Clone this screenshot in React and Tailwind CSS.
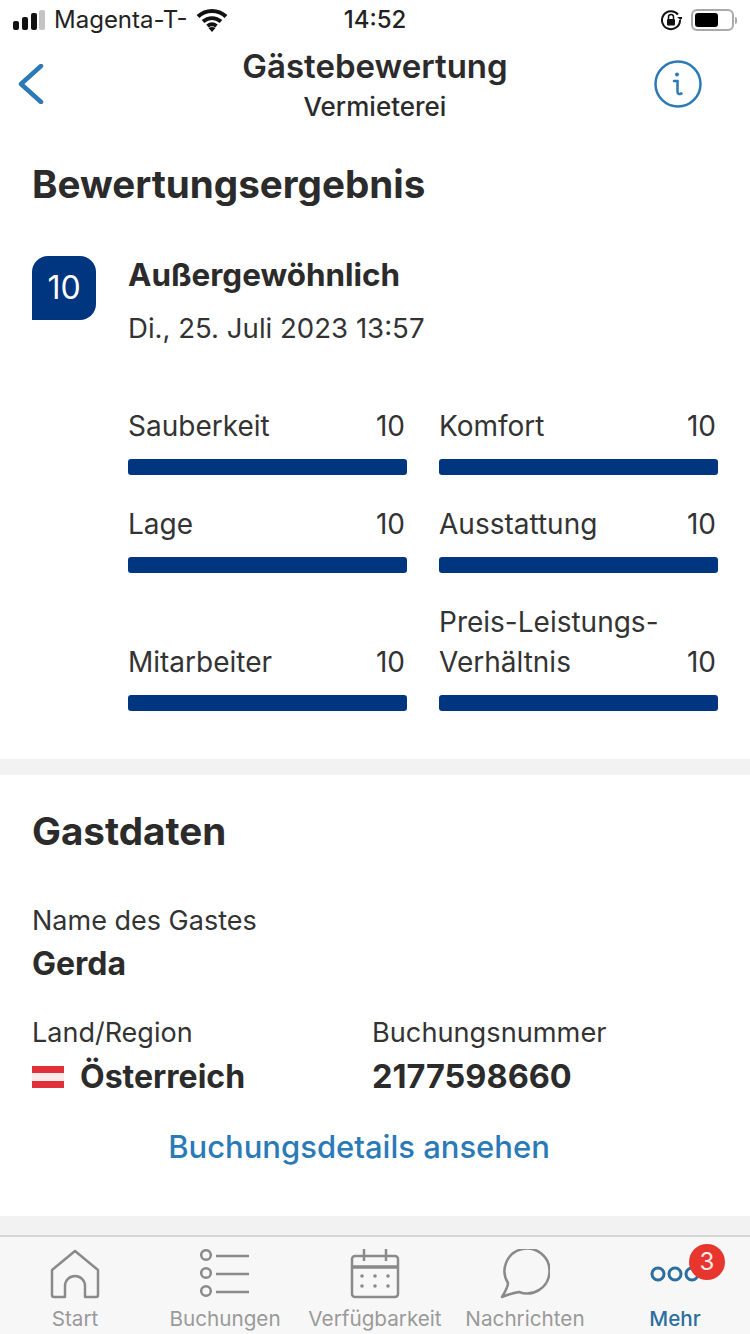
import React from 'react';

const font = { fontFamily: 'Inter, "Noto Sans", sans-serif' };

function Score({ label, second }) {
  return (
    <div className="flex flex-col justify-end">
      <div className="flex items-end justify-between pr-[2px]">
        <div className="text-[28px] leading-[40px] text-[#333]">
          {label}
          {second && <div>{second}</div>}
        </div>
        <span className="text-[28px] leading-[40px] text-[#333]">10</span>
      </div>
      <div className="mt-[13px] h-4 rounded-[3px] bg-[#003580]" />
    </div>
  );
}

function TabItem({ label, active, children }) {
  return (
    <div className="relative flex w-[150px] flex-col items-center">
      <div className="flex h-[54px] items-center justify-center">{children}</div>
      <span className={`mt-[5px] text-[20.7px] leading-[26px] ${active ? 'font-medium text-[#2a6f9e]' : 'text-[#9a9a9a]'}`}>{label}</span>
    </div>
  );
}

export default function App() {
  return (
    <div className="flex h-[1334px] w-[750px] flex-col overflow-hidden bg-white" style={font}>
      {/* status bar */}
      <div className="flex h-10 shrink-0 items-center justify-between pl-[13px] pr-[13px] text-[24px] text-[#222]">
        <div className="flex w-[300px] items-center">
          <svg width="34" height="20" viewBox="0 0 34 20">
            <rect x="0" y="11" width="6" height="9" rx="2" fill="#111" />
            <rect x="9" y="7" width="6" height="13" rx="2" fill="#111" />
            <rect x="18" y="3" width="6" height="17" rx="2" fill="#111" />
            <rect x="26" y="0" width="6" height="20" rx="2" fill="#c4c4c4" />
          </svg>
          <span className="ml-[7px]">Magenta-T-</span>
          <svg className="ml-[8px]" width="32" height="24" viewBox="0 0 32 24">
            <path d="M2 8.500C10 1 22 1 30 8.500M7 13.500c5.500-4.500 12.500-4.500 18 0M11.500 18c3-2.300 6-2.300 9 0" fill="none" stroke="#111" strokeWidth="4" />
            <path d="M16 24l-3.500-4c2-1.500 5-1.500 7 0z" fill="#111" />
          </svg>
        </div>
        <span className="font-medium">14:52</span>
        <div className="flex w-[300px] items-center justify-end gap-[9px]">
          <svg width="22" height="22" viewBox="0 0 22 22">
            <path d="M18 5.500A9 9 0 1 0 20 11" fill="none" stroke="#111" strokeWidth="2" />
            <path d="M20.500 11l-3.500-3h6z" fill="#111" />
            <rect x="7" y="10" width="8" height="6.500" rx="1" fill="#111" />
            <path d="M8.500 10V8a2.500 2.500 0 0 1 5 0v2" fill="none" stroke="#111" strokeWidth="1.500" />
          </svg>
          <div className="flex items-center">
            <div className="flex h-[22px] w-[43px] items-center rounded-[6px] border-2 border-[#aaa] p-[2px]">
              <div className="h-full w-[23px] rounded-[3px] bg-black" />
            </div>
            <div className="ml-[1px] h-[7px] w-[2px] rounded-r-sm bg-[#aaa]" />
          </div>
        </div>
      </div>

      {/* header */}
      <div className="relative flex h-[86px] shrink-0 flex-col items-center pt-[2px] text-[#2b2b2b]">
        <div className="text-[33px] font-semibold leading-[48px]">Gästebewertung</div>
        <div className="text-[26px] font-medium leading-[34px]">Vermieterei</div>
        <svg className="absolute left-[18px] top-[24px]" width="26" height="40" viewBox="0 0 26 40">
          <path d="M23 2L3 20l20 18" fill="none" stroke="#2a7ab8" strokeWidth="4.500" strokeLinecap="round" strokeLinejoin="round" />
        </svg>
        <svg className="absolute left-[654px] top-[20px]" width="48" height="48" viewBox="0 0 48 48">
          <circle cx="24" cy="24" r="22.500" fill="none" stroke="#2a7ab8" strokeWidth="2.500" />
          <circle cx="23" cy="14.500" r="2" fill="#2a7ab8" />
          <path d="M20 21h3.500v11c0 2 1.500 2.500 4 1.500" fill="none" stroke="#2a7ab8" strokeWidth="2.500" strokeLinecap="round" />
        </svg>
      </div>

      {/* rating */}
      <div className="h-[633px] shrink-0 pl-[32px] pr-[32px] pt-[32px]">
        <h1 className="text-[38.6px] font-bold leading-[52px] text-[#2b2b2b]">Bewertungsergebnis</h1>
        <div className="mt-[46px] flex">
          <div className="flex h-16 w-16 shrink-0 items-center justify-center rounded-t-[16px] rounded-br-[16px] bg-[#003580] text-[32px] text-white">10</div>
          <div className="ml-[32px]">
            <div className="text-[31.4px] font-bold leading-[38px] text-[#2b2b2b]">Außergewöhnlich</div>
            <div className="mt-[15px] text-[27.6px] leading-[38px] text-[#333]">Di., 25. Juli 2023 13:57</div>
          </div>
        </div>
        <div className="ml-[96px] mt-[59px] grid grid-cols-2 gap-x-[32px] gap-y-[29px]">
          <Score label="Sauberkeit" />
          <Score label="Komfort" />
          <Score label="Lage" />
          <Score label="Ausstattung" />
          <Score label="Mitarbeiter" />
          <Score label="Preis-Leistungs-" second="Verhältnis" />
        </div>
      </div>

      <div className="h-4 shrink-0 bg-[#f2f2f2]" />

      {/* guest data */}
      <div className="h-[441px] shrink-0 pl-[32px] pt-[30px]">
        <h2 className="text-[38.6px] font-bold leading-[52px] text-[#2b2b2b]">Gastdaten</h2>
        <div className="mt-[46px] text-[27px] leading-[36px] text-[#333]">Name des Gastes</div>
        <div className="mt-[5px] text-[32px] font-bold leading-[40px] text-[#2b2b2b]">Gerda</div>
        <div className="mt-[31px] grid grid-cols-[340px_1fr]">
          <div>
            <div className="text-[27px] leading-[36px] text-[#333]">Land/Region</div>
            <div className="mt-[6px] flex items-center text-[32px] font-bold leading-[40px] text-[#2b2b2b]">
              <div className="mr-[16px] flex h-[22px] w-8 flex-col rounded-[1px]">
                <div className="flex-1 bg-[#e0303a]" />
                <div className="flex-1 bg-[#fbeaea]" />
                <div className="flex-1 bg-[#e0303a]" />
              </div>
              Österreich
            </div>
          </div>
          <div>
            <div className="text-[27.2px] leading-[36px] text-[#333]">Buchungsnummer</div>
            <div className="mt-[6px] text-[32.5px] font-bold leading-[40px] text-[#2b2b2b]">2177598660</div>
          </div>
        </div>
        <div className="mt-[30px] w-[654px] text-center text-[31px] font-medium leading-[40px] text-[#2a7ab8]">Buchungsdetails ansehen</div>
      </div>

      <div className="h-[19px] shrink-0 bg-[#f2f2f2]" />

      {/* tab bar */}
      <div className="flex flex-1 border-t-2 border-[#d6d6d6] bg-[#f7f7f7] pt-[10px]">
        <TabItem label="Start">
          <svg width="50" height="50" viewBox="0 0 50 50" fill="none" stroke="#8a8a8a" strokeWidth="2.500" strokeLinejoin="round">
            <path d="M2 21L25 2l23 19v25a2 2 0 0 1-2 2H35V37a10 10 0 0 0-20 0v11H4a2 2 0 0 1-2-2z" />
          </svg>
        </TabItem>
        <TabItem label="Buchungen">
          <svg width="50" height="50" viewBox="0 0 50 50" fill="none" stroke="#8a8a8a" strokeWidth="2.500">
            <circle cx="6" cy="6" r="4.800" />
            <circle cx="6" cy="24" r="4.800" />
            <circle cx="6" cy="42" r="4.800" />
            <path d="M16 7h33M16 25h33M16 43h33" />
          </svg>
        </TabItem>
        <TabItem label="Verfügbarkeit">
          <svg width="50" height="50" viewBox="0 0 50 50" fill="none" stroke="#8a8a8a" strokeWidth="2.500">
            <rect x="2" y="7" width="46" height="41" rx="3" />
            <path d="M2 18h46" strokeWidth="3.500" />
            <path d="M14 0v12M36 0v12" />
            <g fill="#8a8a8a" stroke="none">
              <circle cx="12" cy="27" r="1.800" /><circle cx="25" cy="27" r="1.800" /><circle cx="38" cy="27" r="1.800" />
              <circle cx="12" cy="37" r="1.800" /><circle cx="25" cy="37" r="1.800" /><circle cx="38" cy="37" r="1.800" />
            </g>
          </svg>
        </TabItem>
        <TabItem label="Nachrichten">
          <svg width="50" height="50" viewBox="0 0 50 50" fill="none" stroke="#8a8a8a" strokeWidth="2.500" strokeLinejoin="round">
            <path d="M8 34A22.500 22.500 0 1 1 19 43C13 44 7 46 2 48 5 43 8 38 8 34Z" />
          </svg>
        </TabItem>
        <TabItem label="Mehr" active>
          <svg width="50" height="16" viewBox="0 0 50 16" fill="none" stroke="#2a6f9e" strokeWidth="3">
            <circle cx="8" cy="8" r="6" /><circle cx="25" cy="8" r="6" /><circle cx="42" cy="8" r="6" />
          </svg>
          <div className="absolute left-[89px] top-[-3px] flex h-9 w-9 items-center justify-center rounded-full bg-[#e8352e] text-[24px] text-white/90">3</div>
        </TabItem>
      </div>
    </div>
  );
}
